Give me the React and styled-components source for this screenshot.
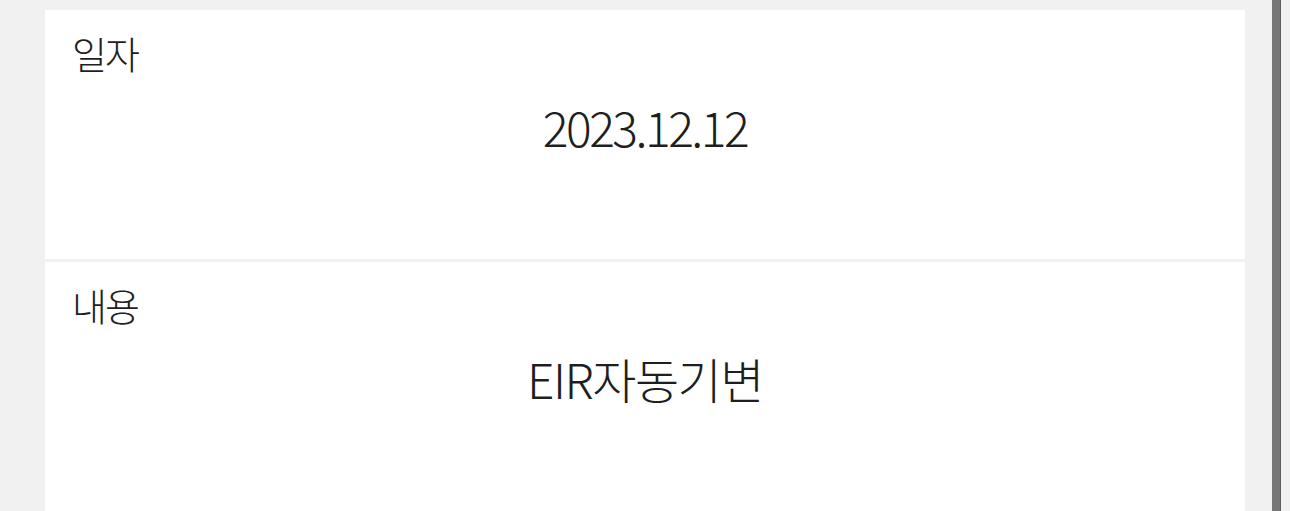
import React from "react";
import styled, { createGlobalStyle } from "styled-components";

const GlobalStyle = createGlobalStyle`
    html, body {
        margin: 0;
        padding: 0;
        background: #f1f1f1;
        overflow: hidden;
    }
    body {
        font-family: "Noto Sans CJK KR", "Noto Sans", sans-serif;
        color: #1e1e1e;
    }
`

function App() {
    const rows = [
        { id: 1, label: "일자", value: "2023.12.12", spacing: -2.5 },
        { id: 2, label: "내용", value: "EIR자동기변", spacing: -1.5 },
    ]
    return (
        <>
            <GlobalStyle />
            <Wrapper>
                <Container>
                    {rows.map((item) => (
                        <Section key={item.id}>
                            <Label>{item.label}</Label>
                            <Value $spacing={item.spacing}>{item.value}</Value>
                        </Section>
                    ))}
                </Container>
                <Rail>
                    <Thumb />
                </Rail>
            </Wrapper>
        </>
    )
}

export default App

const Wrapper = styled.div`
    width: 1290px;
    height: 511px;
    display: flex;
    padding: 10px 0 0 45px;
    box-sizing: border-box;
    overflow: hidden;
`

const Container = styled.div`
    width: 1200px;
    display: flex;
    flex-direction: column;
    gap: 3px;
    flex-shrink: 0;
`

const Section = styled.div`
    height: 249px;
    flex-shrink: 0;
    background: #ffffff;
    padding: 20px 27px 0;
    box-sizing: border-box;
`

const Label = styled.div`
    font-size: 38px;
    line-height: 46px;
    font-weight: 300;
    letter-spacing: -2px;
    color: #1e1e1e;
`

const Value = styled.div`
    margin-top: 20px;
    text-align: center;
    font-size: 48px;
    line-height: 60px;
    font-weight: 300;
    letter-spacing: ${(p) => p.$spacing}px;
    color: #1e1e1e;
`

const Rail = styled.div`
    flex: 1;
    display: flex;
    justify-content: flex-end;
    padding-right: 9px;
    margin-top: -10px;
`

const Thumb = styled.div`
    width: 9px;
    height: 521px;
    background: #777777;
    border-right: 1px solid #5e5e5e;
    box-sizing: border-box;
`
